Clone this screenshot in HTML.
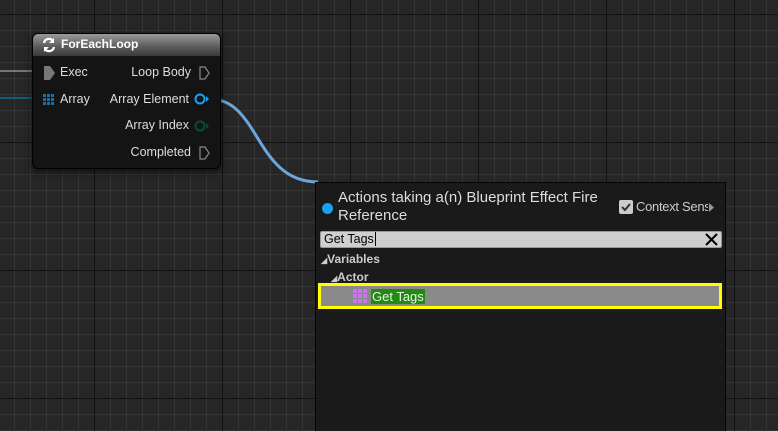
<!DOCTYPE html>
<html><head><meta charset="utf-8"><style>
*{margin:0;padding:0;box-sizing:border-box}
html{width:778px;height:431px;overflow:hidden}
body{width:778px;height:431px;overflow:hidden;position:relative;font-family:"Liberation Sans",sans-serif;
background-color:#262626;
background-image:
linear-gradient(to right,#121212 1px,transparent 1px),
linear-gradient(to bottom,#121212 1px,transparent 1px),
linear-gradient(to right,#353535 1px,transparent 1px),
linear-gradient(to bottom,#353535 1px,transparent 1px);
background-size:128px 128px,128px 128px,16px 16px,16px 16px;
background-position:94px 0,0 14px,14px 0,0 14px;}
.node{position:absolute;left:32px;top:33px;width:189px;height:136px;background:#141414;border:1px solid #000;border-radius:6px;box-shadow:0 3px 8px rgba(0,0,0,.6);color:#ddd;font-size:12.5px}
.hdr{height:22px;border-radius:5px 5px 0 0;background:linear-gradient(#9a9a9a,#5a5a5a 60%,#3a3a3a);color:#fff;font-weight:bold;font-size:12px;padding:3px 0 0 28px;position:relative}
.t{position:absolute;white-space:nowrap}
.panel{position:absolute;left:315px;top:182px;width:411px;height:249px;background:#1a1a1a;border:1px solid #050505;border-bottom:none;overflow:hidden}
</style></head><body>
<svg width="778" height="431" style="position:absolute;left:0;top:0">
<line x1="0" y1="71" x2="36" y2="71" stroke="#aaa" stroke-width="2" opacity=".6"/>
<line x1="0" y1="98" x2="36" y2="98" stroke="#135a80" stroke-width="2"/>
<path d="M210 99 C 260 99,255 182,318 182" stroke="#6aa6dc" stroke-width="3" fill="none"/>
</svg>
<div class="node">
<div class="hdr"><svg style="position:absolute;left:8px;top:3px" width="16" height="16" viewBox="0 0 16 16"><path d="M3 6a5 5 0 0 1 9-2M13 10a5 5 0 0 1-9 2" stroke="#fff" stroke-width="2.2" fill="none"/><path d="M13 1v5h-5z M3 15v-5h5z" fill="#fff"/></svg>ForEachLoop</div>
<svg style="position:absolute;left:11px;top:32px" width="12" height="14"><path d="M0 0h6l5 7-5 7H0z" fill="#777"/></svg>
<div class="t" style="left:27px;top:31px">Exec</div>
<div class="t" style="right:29px;top:31px">Loop Body</div>
<svg style="position:absolute;right:9px;top:32px" width="12" height="14"><path d="M1 1h5l4 6-4 6H1z" fill="none" stroke="#888" stroke-width="1.2"/></svg>
<svg style="position:absolute;left:10px;top:60px" width="11" height="11"><g fill="#1e6ea0"><rect x="0" y="0" width="3" height="3"/><rect x="4" y="0" width="3" height="3"/><rect x="8" y="0" width="3" height="3"/><rect x="0" y="4" width="3" height="3"/><rect x="4" y="4" width="3" height="3"/><rect x="8" y="4" width="3" height="3"/><rect x="0" y="8" width="3" height="3"/><rect x="4" y="8" width="3" height="3"/><rect x="8" y="8" width="3" height="3"/></g></svg>
<div class="t" style="left:27px;top:58px">Array</div>
<div class="t" style="right:31px;top:58px">Array Element</div>
<svg style="position:absolute;right:10px;top:59px" width="16" height="12"><circle cx="6" cy="6" r="4.5" fill="none" stroke="#1aa0f0" stroke-width="2"/><path d="M12 3l3 3-3 3z" fill="#1aa0f0"/></svg>
<div class="t" style="right:31px;top:84px">Array Index</div>
<svg style="position:absolute;right:10px;top:86px" width="16" height="12"><circle cx="6" cy="6" r="4.5" fill="none" stroke="#0b4a3a" stroke-width="2"/><path d="M12 3l3 3-3 3z" fill="#0b4a3a"/></svg>
<div class="t" style="right:29px;top:111px">Completed</div>
<svg style="position:absolute;right:9px;top:112px" width="12" height="14"><path d="M1 1h5l4 6-4 6H1z" fill="none" stroke="#888" stroke-width="1.2"/></svg>
</div>
<div class="panel">
<div style="position:absolute;left:6px;top:20px;width:11px;height:11px;border-radius:50%;background:#1aa0f0"></div>
<div class="t" style="left:22px;top:6px;font-size:15px;color:#ddd;line-height:18px">Actions taking a(n) Blueprint Effect Fire<br>Reference</div>
<div style="position:absolute;left:303px;top:17px;width:14px;height:14px;background:#ccc;border-radius:2px"><svg width="14" height="14"><path d="M3 7l3 3 5-6" stroke="#333" stroke-width="2" fill="none"/></svg></div>
<div class="t" style="left:320px;top:16px;font-size:13px;color:#ccc;width:72px;overflow:hidden;letter-spacing:-0.3px">Context Sens</div>
<svg style="position:absolute;left:393px;top:20px" width="6" height="9"><path d="M0 0l5 4.5L0 9z" fill="#999"/></svg>
<div style="position:absolute;left:4px;top:48px;width:402px;height:17px;background:#cfcfcf;border-radius:2px;border:1px solid #999"></div>
<div class="t" style="left:8px;top:49px;font-size:12.5px;color:#000">Get Tags<span style="border-left:1px solid #000;margin-left:1px"></span></div>
<svg style="position:absolute;left:389px;top:50px" width="13" height="13"><path d="M1 1l11 11M12 1L1 12" stroke="#000" stroke-width="2"/></svg>
<div class="t" style="left:5px;top:69px;font-size:12px;font-weight:bold;color:#ccc"><span style="font-size:8px">◢</span>Variables</div>
<div class="t" style="left:15px;top:87px;font-size:12px;font-weight:bold;color:#ccc"><span style="font-size:8px">◢</span>Actor</div>
<div style="position:absolute;left:2px;top:100px;width:404px;height:26px;border:3px solid #ff0;background:#8a8a8a"></div>
<svg style="position:absolute;left:37px;top:106px" width="15" height="14"><g fill="#c873f0"><rect x="0" y="0" width="4" height="4"/><rect x="5" y="0" width="4" height="4"/><rect x="10" y="0" width="4" height="4"/><rect x="0" y="5" width="4" height="4"/><rect x="5" y="5" width="4" height="4"/><rect x="10" y="5" width="4" height="4"/><rect x="0" y="10" width="4" height="4"/><rect x="5" y="10" width="4" height="4"/><rect x="10" y="10" width="4" height="4"/></g></svg>
<div class="t" style="left:55px;top:106px;height:15px;background:#1f8c10;color:#eee;font-size:13px;padding:0 1px;line-height:15px">Get Tags</div>
</div>
</body></html>
